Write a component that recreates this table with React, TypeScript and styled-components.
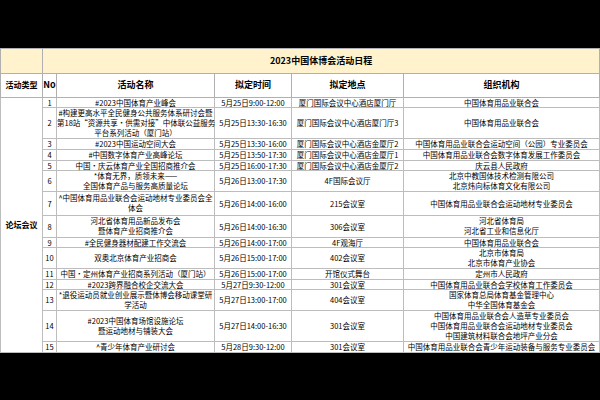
import React from 'react';
import styled, { createGlobalStyle } from 'styled-components';

const GlobalStyle = createGlobalStyle`
  html, body { margin: 0; padding: 0; background: #000; }
  body { font-family: "Noto Sans CJK SC", "Microsoft YaHei", sans-serif; }
`;

// --- Styled Components ---
const Screen = styled.div`
  width: 600px;
  height: 400px;
  display: flex;
  align-items: center;
`;

const Sheet = styled.div`
  width: 600px;
  background: #fff;
`;

const Table = styled.table`
  width: 599px;
  table-layout: fixed;
  border-collapse: collapse;
  color: #000;
  font-size: 7.5px;
  line-height: 9px;
`;

const Row = styled.tr<{ $h: number }>`
  height: ${p => p.$h}px;
`;

const Cell = styled.td`
  border: 1px solid #bdbdbd;
  padding: 0;
  text-align: center;
  vertical-align: middle;
  white-space: nowrap;
  overflow: visible;
`;

const TitleCell = styled(Cell)`
  background: #fff2cc;
  font-size: 9px;
  font-weight: 700;
  border-color: #b0b0b0;
`;

const HeadCell = styled(Cell)<{ $tight?: boolean }>`
  font-size: ${p => (p.$tight ? 8 : 9)}px;
  line-height: 12px;
  font-weight: 700;
  border-color: #b0b0b0;
`;

const TypeCell = styled(Cell)`
  font-size: 8px;
  line-height: 12px;
  font-weight: 700;
`;

const Line = styled.div`
  line-height: 10px;
`;

type Item = {
  name: string[];
  time: string;
  place: string;
  org: string[];
  h: number;
};

const items: Item[] = [
  { name: ['#2023中国体育产业峰会'], time: '5月25日9:00-12:00', place: '厦门国际会议中心酒店厦门厅', org: ['中国体育用品业联合会'], h: 10 },
  {
    name: ['#构建更高水平全民健身公共服务体系研讨会暨', '第18站“资源共享·供需对接”中体联公益服务', '平台系列活动（厦门站）'],
    time: '5月25日13:30-16:30', place: '厦门国际会议中心酒店厦门厅3', org: ['中国体育用品业联合会'], h: 31,
  },
  { name: ['#2023中国运动空间大会'], time: '5月25日13:30-16:00', place: '厦门国际会议中心酒店金厦厅2', org: ['中国体育用品业联合会运动空间（公园）专业委员会'], h: 11 },
  { name: ['#中国数字体育产业高峰论坛'], time: '5月25日13:50-17:30', place: '厦门国际会议中心酒店金厦厅1', org: ['中国体育用品业联合会数字体育发展工作委员会'], h: 11 },
  { name: ['中国·庆云体育产业全国招商推介会'], time: '5月25日16:00-17:30', place: '厦门国际会议中心酒店金厦厅2', org: ['庆云县人民政府'], h: 10 },
  { name: ['*体育无界，质领未来——', '全国体育产品与服务高质量论坛'], time: '5月26日13:00-17:30', place: '4F国际会议厅', org: ['北京中教国体技术检测有限公司', '北京炜向标体育文化有限公司'], h: 21 },
  { name: ['^中国体育用品业联合会运动地材专业委员会全', '体会'], time: '5月26日14:00-16:00', place: '215会议室', org: ['中国体育用品业联合会运动地材专业委员会'], h: 24 },
  { name: ['河北省体育用品新品发布会', '暨体育产业招商推介会'], time: '5月26日14:00-16:30', place: '306会议室', org: ['河北省体育局', '河北省工业和信息化厅'], h: 22 },
  { name: ['#全民健身器材配建工作交流会'], time: '5月26日14:00-17:00', place: '4F观海厅', org: ['中国体育用品业联合会'], h: 10 },
  { name: ['双奥北京体育产业招商会'], time: '5月26日15:00-17:00', place: '402会议室', org: ['北京市体育局', '北京市体育产业协会'], h: 21 },
  { name: ['中国·定州体育产业招商系列活动（厦门站）'], time: '5月26日15:00-17:00', place: '开馆仪式舞台', org: ['定州市人民政府'], h: 11 },
  { name: ['#2023跨界融合校企交流大会'], time: '5月27日9:30-12:00', place: '301会议室', org: ['中国体育用品业联合会学校体育工作委员会'], h: 10 },
  { name: ['*退役运动员就业创业展示暨体博会移动课堂研', '学活动'], time: '5月27日13:00-17:00', place: '404会议室', org: ['国家体育总局体育基金管理中心', '中华全国体育基金会'], h: 21 },
  {
    name: ['#2023中国体育场馆设施论坛', '暨运动地材与铺装大会'], time: '5月27日14:00-16:30', place: '301会议室',
    org: ['中国体育用品业联合会人造草专业委员会', '中国体育用品业联合会运动地材专业委员会', '中国建筑材料联合会地坪产业分会'], h: 31,
  },
  { name: ['^青少年体育产业研讨会'], time: '5月28日9:30-12:00', place: '301会议室', org: ['中国体育用品业联合会青少年运动装备与服务专业委员会'], h: 11 },
];

const Lines = ({ list }: { list: string[] }) =>
  list.length === 1 ? (
    <>{list[0]}</>
  ) : (
    <>
      {list.map((t, i) => <Line key={i}>{t}</Line>)}
    </>
  );

// --- Componente Principal ---
const App: React.FC = () => {
  return (
    <>
      <GlobalStyle />
      <Screen>
        <Sheet>
          <Table>
            <colgroup>
              <col style={{ width: 42 }} />
              <col style={{ width: 14 }} />
              <col style={{ width: 158 }} />
              <col style={{ width: 77 }} />
              <col style={{ width: 112 }} />
              <col style={{ width: 196 }} />
            </colgroup>
            <tbody>
              <Row $h={25}>
                <TitleCell />
                <TitleCell colSpan={5}>2023中国体博会活动日程</TitleCell>
              </Row>
              <Row $h={24}>
                <HeadCell $tight>活动类型</HeadCell>
                <HeadCell>No</HeadCell>
                <HeadCell>活动名称</HeadCell>
                <HeadCell>拟定时间</HeadCell>
                <HeadCell>拟定地点</HeadCell>
                <HeadCell>组织机构</HeadCell>
              </Row>
              {items.map((it, i) => (
                <Row key={i} $h={it.h}>
                  {i === 0 && <TypeCell rowSpan={items.length}>论坛会议</TypeCell>}
                  <Cell>{i + 1}</Cell>
                  <Cell><Lines list={it.name} /></Cell>
                  <Cell>{it.time}</Cell>
                  <Cell>{it.place}</Cell>
                  <Cell><Lines list={it.org} /></Cell>
                </Row>
              ))}
            </tbody>
          </Table>
        </Sheet>
      </Screen>
    </>
  );
};

export default App;
